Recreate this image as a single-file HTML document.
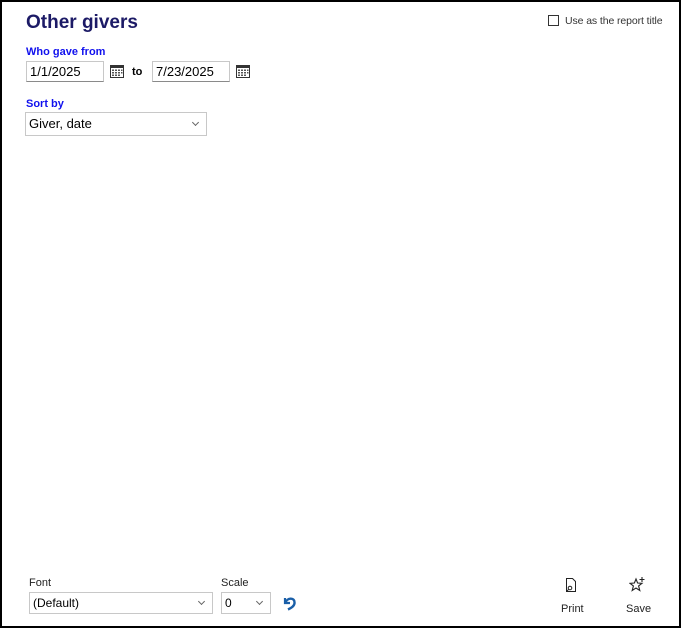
<!DOCTYPE html>
<html><head><meta charset="utf-8"><style>
*{box-sizing:border-box;margin:0;padding:0}
body{width:681px;height:628px;background:#fff;font-family:"Liberation Sans",Arial,sans-serif;position:relative;overflow:hidden}
.frame{position:absolute;left:0;top:0;width:681px;height:628px;border:2px solid #000}
.a{position:absolute}
.title{left:26px;top:12px;font-size:19px;font-weight:bold;color:#1c1a66}
.lbl{font-size:11px;font-weight:bold;color:#1010ee}
.inp{border:1px solid #c8c8c8;border-bottom-color:#8a8a8a;background:#fff;font-size:13px;color:#000;padding-left:3px;line-height:19px}
.sel{border:1px solid #c8c8c8;background:#fff;font-size:13px;color:#000;padding-left:3px}
.chev{position:absolute;right:8px;top:7px;width:5px;height:5px;border-right:1px solid #666;border-bottom:1px solid #666;transform:rotate(45deg)}
.small{font-size:11px;color:#222}
</style></head><body>
<div class="frame"></div>
<div class="a title">Other givers</div>
<div class="a" style="left:548px;top:15px;width:11px;height:11px;border:1px solid #333"></div>
<div class="a small" style="left:565px;top:15px;color:#333;font-size:10.5px;letter-spacing:-0.1px">Use as the report title</div>

<div class="a lbl" style="left:26px;top:46px">Who gave from</div>
<div class="a inp" style="left:26px;top:61px;width:78px;height:21px">1/1/2025</div>
<svg class="a" style="left:110px;top:64px" width="14" height="14" viewBox="0 0 14 14"><rect x="0.5" y="1.5" width="13" height="12" fill="none" stroke="#333"/><rect x="0.5" y="1.5" width="13" height="2.5" fill="#333"/><g fill="#555"><rect x="2" y="5.5" width="2" height="1.5"/><rect x="5" y="5.5" width="2" height="1.5"/><rect x="8" y="5.5" width="2" height="1.5"/><rect x="11" y="5.5" width="1.5" height="1.5"/><rect x="2" y="8" width="2" height="1.5"/><rect x="5" y="8" width="2" height="1.5"/><rect x="8" y="8" width="2" height="1.5"/><rect x="11" y="8" width="1.5" height="1.5"/><rect x="2" y="10.5" width="2" height="1.5"/><rect x="5" y="10.5" width="2" height="1.5"/><rect x="8" y="10.5" width="2" height="1.5"/></g></svg>
<div class="a" style="left:132px;top:66px;font-size:11px;font-weight:bold">to</div>
<div class="a inp" style="left:152px;top:61px;width:78px;height:21px">7/23/2025</div>
<svg class="a" style="left:236px;top:64px" width="14" height="14" viewBox="0 0 14 14"><rect x="0.5" y="1.5" width="13" height="12" fill="none" stroke="#333"/><rect x="0.5" y="1.5" width="13" height="2.5" fill="#333"/><g fill="#555"><rect x="2" y="5.5" width="2" height="1.5"/><rect x="5" y="5.5" width="2" height="1.5"/><rect x="8" y="5.5" width="2" height="1.5"/><rect x="11" y="5.5" width="1.5" height="1.5"/><rect x="2" y="8" width="2" height="1.5"/><rect x="5" y="8" width="2" height="1.5"/><rect x="8" y="8" width="2" height="1.5"/><rect x="11" y="8" width="1.5" height="1.5"/><rect x="2" y="10.5" width="2" height="1.5"/><rect x="5" y="10.5" width="2" height="1.5"/><rect x="8" y="10.5" width="2" height="1.5"/></g></svg>

<div class="a lbl" style="left:26px;top:98px">Sort by</div>
<div class="a sel" style="left:25px;top:112px;width:182px;height:24px;line-height:22px">Giver, date<span class="chev"></span></div>

<div class="a small" style="left:29px;top:577px">Font</div>
<div class="a sel" style="left:29px;top:592px;width:184px;height:22px;line-height:21px;font-size:12px">(Default)<span class="chev" style="top:6px"></span></div>
<div class="a small" style="left:221px;top:577px">Scale</div>
<div class="a sel" style="left:221px;top:592px;width:50px;height:22px;line-height:21px;font-size:12px">0<span class="chev" style="top:6px"></span></div>
<svg class="a" style="left:282px;top:595px" width="15" height="16" viewBox="0 0 15 16"><path d="M3 3 L3 8 L8 8" fill="none" stroke="#1a5fa8" stroke-width="2.2"/><path d="M3.5 7.5 C5 3 12 2 12.5 7 C13 11 9 13 6 14.5" fill="none" stroke="#1a5fa8" stroke-width="2.4"/></svg>

<svg class="a" style="left:564px;top:577px" width="14" height="16" viewBox="0 0 14 16"><path d="M2.5 1.5 H8.5 L11.5 4.5 V14.5 H2.5 Z" fill="none" stroke="#222"/><circle cx="6" cy="11" r="1.8" fill="none" stroke="#222"/><path d="M4.5 12.5 L3 14" stroke="#222"/></svg>
<div class="a small" style="left:561px;top:603px;font-size:11px">Print</div>
<svg class="a" style="left:629px;top:576px" width="17" height="17" viewBox="0 0 17 17"><path d="M7 3 L8.6 7 L13 7.3 L9.6 10 L10.8 14.5 L7 12 L3.2 14.5 L4.4 10 L1 7.3 L5.4 7 Z" fill="none" stroke="#222" stroke-width="1.1"/><path d="M13 1 V6 M10.5 3.5 H15.5" stroke="#222" stroke-width="1.1"/></svg>
<div class="a small" style="left:626px;top:603px;font-size:11px">Save</div>
</body></html>
